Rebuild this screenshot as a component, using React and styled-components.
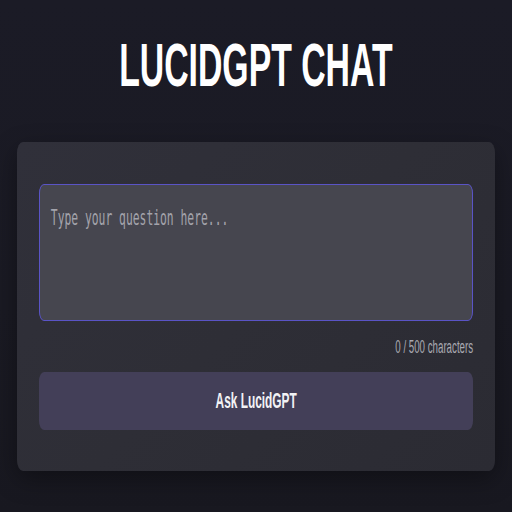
import React, { useState } from "react";
import styled, { createGlobalStyle } from "styled-components";

// the reference is squeezed sideways, so text gets a horizontal squash
const SQUASH = 0.54;

const GlobalStyle = createGlobalStyle`
  html, body {
    margin: 0;
    padding: 0;
    background: #1a1a23;
  }
  body {
    font-family: "Liberation Sans", Arial, sans-serif;
    min-height: 512px;
  }
`;

const Page = styled.div`
  min-height: 512px;
  box-sizing: border-box;
  padding: 29px 17px 0;
  background: linear-gradient(180deg, #1b1b26 0%, #1a1a23 60%, #181820 100%);
`;

const Title = styled.h1`
  display: flex;
  justify-content: center;
  margin: 0 0 42px;
  font-size: 62px;
  font-weight: 700;
  color: #ffffff;
  white-space: nowrap;
  span {
    flex-shrink: 0;
    display: inline-block;
    transform: scaleX(0.545);
  }
`;

const Card = styled.div`
  display: flex;
  flex-direction: column;
  padding: 42px 22px 41px;
  border-radius: 6px / 11px;
  background: linear-gradient(135deg, #30303a 0%, #2e2e36 50%, #2b2b33 100%);
  box-shadow: 0 8px 24px rgba(0, 0, 0, 0.35);
`;

const Field = styled.div`
  height: 137px;
  box-sizing: border-box;
  border: 1px solid #5a54c6;
  border-radius: 5px / 9px;
  background: #46464f;
  overflow: hidden;
`;

const Input = styled.textarea`
  display: block;
  width: ${100 / SQUASH}%;
  height: 100%;
  box-sizing: border-box;
  margin: 0;
  padding: 21px 20px;
  border: none;
  outline: none;
  resize: none;
  background: transparent;
  color: #e8e8ee;
  font-family: "DejaVu Sans Mono", monospace;
  font-size: 21px;
  transform: scaleX(${SQUASH});
  transform-origin: left top;
  &::placeholder {
    color: #a3a3ab;
  }
`;

const Counter = styled.div`
  margin-top: 16px;
  text-align: right;
  font-size: 18px;
  color: #a9a9b1;
  white-space: nowrap;
  span {
    display: inline-block;
    transform: scaleX(${SQUASH});
    transform-origin: right center;
  }
`;

const AskButton = styled.button`
  margin-top: 14px;
  height: 58px;
  border: none;
  border-radius: 5px / 9px;
  background: #433f58;
  color: #f2f2f5;
  font-family: "Liberation Sans", Arial, sans-serif;
  font-size: 22px;
  font-weight: 700;
  white-space: nowrap;
  cursor: pointer;
  span {
    display: inline-block;
    transform: scaleX(${SQUASH});
  }
`;

export default function App() {
  const [question, setQuestion] = useState("");
  return (
    <>
      <GlobalStyle />
      <Page>
        <Title>
          <span>LUCIDGPT CHAT</span>
        </Title>
        <Card>
          <Field>
            <Input
              value={question}
              maxLength={500}
              placeholder="Type your question here..."
              onChange={(e) => setQuestion(e.target.value)}
            />
          </Field>
          <Counter>
            <span>{question.length} / 500 characters</span>
          </Counter>
          <AskButton>
            <span>Ask LucidGPT</span>
          </AskButton>
        </Card>
      </Page>
    </>
  );
}
